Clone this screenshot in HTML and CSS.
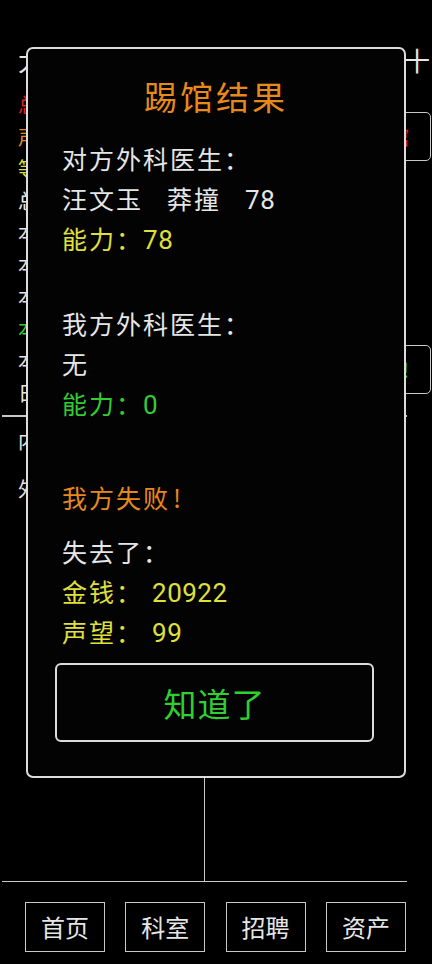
FILE: index.html
```html
<!DOCTYPE html>
<html lang="zh-CN">

<head>
    <meta charset="UTF-8">
    <meta name="viewport" content="width=device-width, initial-scale=1.0">
    <title>踢馆结果</title>
    <link rel="stylesheet" href="styles.css">
</head>

<body>
    <div class="app">
        <!-- Page behind the dialog -->
        <header class="top">
            <span>大夫医馆</span>
            <span>第三年四月上旬二十</span>
        </header>

        <div class="main">
            <ul class="stats">
                <li class="red">总资金</li>
                <li class="orange">声望</li>
                <li class="yellow">等级</li>
                <li>总病人</li>
                <li>本月收入</li>
                <li>本月支出</li>
                <li>本月工资</li>
                <li class="green">本月利润</li>
                <li>本月病人</li>
                <li>日均病人</li>
            </ul>
            <div class="side">
                <button class="side-btn red first">踢馆</button>
                <button class="side-btn green second">开业!</button>
            </div>
        </div>

        <div class="rule"></div>

        <ul class="depts">
            <li>内科</li>
            <li>外科</li>
        </ul>

        <div class="split">
            <div class="split-left"></div>
        </div>

        <nav class="tabs">
            <button class="tab">首页</button>
            <button class="tab">科室</button>
            <button class="tab">招聘</button>
            <button class="tab">资产</button>
        </nav>
    </div>

    <!-- Result dialog -->
    <div class="dialog">
        <h1 class="dialog-title">踢馆结果</h1>

        <p class="line">对方外科医生：</p>
        <p class="line"><span class="gap">汪文玉</span><span class="gap">莽撞</span><span class="num">78</span></p>
        <p class="line yellow">能力：<span class="num">78</span></p>

        <p class="line group">我方外科医生：</p>
        <p class="line">无</p>
        <p class="line green">能力：<span class="num">0</span></p>

        <p class="line orange result">我方失败<span class="bang">!</span></p>

        <p class="line lost">失去了：</p>
        <p class="line yellow">金钱：<span class="num pad">20922</span></p>
        <p class="line yellow">声望：<span class="num pad">99</span></p>

        <button class="ok-btn">知道了</button>
    </div>
</body>

</html>
```

FILE: styles.css
```css
/* General styles */
* {
    box-sizing: border-box;
    margin: 0;
    padding: 0;
    font-family: 'Noto Sans CJK SC', 'Noto Sans', sans-serif;
}

/* Color palette */
:root {
    --bg-color: #000000;
    --text-color: #e6e6e6;
    --line-color: #c8c8c8;
    --orange: #e8891c;
    --yellow: #e0e03c;
    --green: #33cc33;
    --red: #e02020;
}

body {
    background-color: var(--bg-color);
    color: var(--text-color);
    width: 432px;
    height: 964px;
    overflow: hidden;
}

ul {
    list-style: none;
}

button {
    background: none;
    font-family: inherit;
    color: var(--text-color);
    cursor: pointer;
}

.red { color: var(--red); }
.orange { color: var(--orange); }
.yellow { color: var(--yellow); }
.green { color: var(--green); }

/* Page behind the dialog */
.app {
    height: 964px;
    display: flex;
    flex-direction: column;
}

.top {
    display: flex;
    justify-content: space-between;
    margin-top: 40px;
    padding: 0 1px 0 18px;
    height: 40px;
    font-size: 26px;
    line-height: 40px;
    letter-spacing: 1px;
    white-space: nowrap;
}

.main {
    display: flex;
    padding-top: 9px;
}

.stats {
    flex: 1;
    padding-left: 18px;
    font-size: 20px;
    line-height: 32px;
}

.side {
    display: flex;
    flex-direction: column;
    align-items: flex-end;
    padding-right: 1px;
}

.side-btn {
    width: 100px;
    height: 49px;
    border: 1.5px solid var(--line-color);
    border-radius: 5px;
    font-size: 20px;
    text-align: right;
    padding-right: 21px;
}

.side-btn.first {
    margin-top: 23px;
}

.side-btn.second {
    margin-top: 184px;
}

.rule {
    margin: 6px 0 0 2px;
    width: 405px;
    height: 1.5px;
    background-color: var(--line-color);
}

.depts {
    padding-left: 18px;
    font-size: 20px;
    line-height: 48px;
}

.split {
    flex: 1;
    display: flex;
    padding-left: 2px;
}

.split-left {
    width: 203px;
    border-right: 1.5px solid var(--line-color);
    border-bottom: 1.5px solid var(--line-color);
}

.split::after {
    content: "";
    width: 202px;
    border-bottom: 1.5px solid var(--line-color);
}

.tabs {
    display: flex;
    gap: 20.3px;
    padding: 20px 0 12px 25px;
}

.tab {
    width: 80px;
    height: 50px;
    border: 1.5px solid var(--line-color);
    font-size: 24px;
    line-height: 44px;
}

/* Dialog */
.dialog {
    position: absolute;
    left: 26px;
    top: 47px;
    width: 380px;
    height: 731px;
    background-color: #030303;
    border: 2px solid #dcdcdc;
    border-radius: 7px;
    padding: 23px 0 0 34px;
}

.dialog-title {
    text-align: center;
    margin-left: -34px;
    font-size: 33px;
    font-weight: normal;
    letter-spacing: 3px;
    line-height: 48px;
    color: var(--orange);
    margin-bottom: 18px;
}

.line {
    height: 40px;
    font-size: 25px;
    line-height: 40px;
    letter-spacing: 2px;
    white-space: nowrap;
}

.gap {
    margin-right: 24px;
}

.num {
    font-family: Roboto, 'Noto Sans', sans-serif;
    font-size: 26px;
    line-height: 1;
    letter-spacing: 0.5px;
}

.num.pad {
    margin-left: 9px;
}

.bang {
    margin-left: 3px;
}

.group {
    margin-top: 45px;
}

.result {
    margin-top: 54px;
}

.lost {
    margin-top: 14px;
}

.ok-btn {
    display: block;
    margin: 12px 0 0 -7px;
    width: 319px;
    height: 79px;
    border: 2px solid #dcdcdc;
    border-radius: 6px;
    font-size: 33px;
    letter-spacing: 1px;
    color: #2fd02f;
}
```
